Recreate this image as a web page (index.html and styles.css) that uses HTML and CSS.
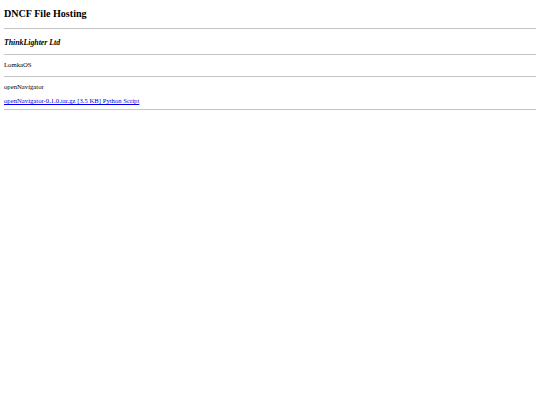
FILE: index.html
```html
<!DOCTYPE html>
<html>
<head>
<meta charset="utf-8">
<title>DNCF File Hosting</title>
<link rel="stylesheet" href="styles.css">
</head>
<body>
<div class="page">
  <h1 class="title">DNCF File Hosting</h1>
  <hr class="rule">
  <h3 class="company">ThinkLighter Ltd</h3>
  <hr class="rule">
  <p class="project">LomkaOS</p>
  <hr class="rule">
  <p class="project project-files">openNavigator</p>
  <p class="file"><a href="#" class="file-link">openNavigator-0.1.0.tar.gz [3.5 KB] Python Script</a></p>
  <hr class="rule">
</div>
</body>
</html>
```

FILE: styles.css
```css
html, body {
  margin: 0;
  padding: 0;
  background: #ffffff;
}
body {
  font-family: "Liberation Serif", "Times New Roman", serif;
  color: #000000;
  font-size: 6.7px;
}
.page {
  padding: 0 4px;
  display: flow-root;
}
.title {
  font-size: 10.1px;
  font-weight: bold;
  line-height: 14px;
  margin: 7px 0 7px 0;
}
.rule {
  border: 0;
  border-top: 1px solid #c4c4c4;
  height: 0;
  margin: 0;
}
.company {
  font-size: 7.8px;
  font-weight: bold;
  font-style: italic;
  line-height: 9px;
  margin: 8.5px 0 7.5px 0;
}
.project {
  line-height: 8px;
  margin: 6px 0 7px 0;
}
.project-files {
  margin-bottom: 6px;
}
.file {
  line-height: 8px;
  margin: 0 0 4px 0;
}
.file-link {
  color: #0000ee;
  text-decoration: underline;
}
```
